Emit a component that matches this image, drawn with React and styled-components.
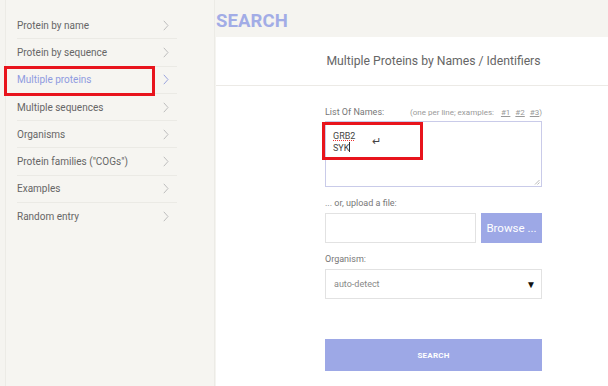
import React from "react";
import styled, { createGlobalStyle } from "styled-components";

const Global = createGlobalStyle`
  html, body { margin: 0; padding: 0; background: #f5f4f0; }
  body { font-family: Roboto, "Liberation Sans", sans-serif; width: 608px; height: 386px; overflow: hidden; }
  * { box-sizing: border-box; }
`;

const Page = styled.div`
  display: flex;
  height: 386px;
  padding-left: 5px;
`;

const Sidebar = styled.nav`
  width: 210px;
  flex: none;
  background: #f6f5f1;
  border-left: 1px solid #ecebe6;
  border-right: 1px solid #ecebe6;
  padding: 12px 0 0 11px;
  position: relative;
`;

const NavItem = styled.div`
  position: relative;
  width: 160px;
  height: 27.3px;
  display: flex;
  align-items: center;
  justify-content: space-between;
  font-size: 10px;
  color: ${p => (p.$active ? "#8f9be0" : "#666")};
  border-bottom: ${p => (p.$last ? "none" : "1px solid #ebeae5")};
  padding-right: 8px;
`;

const Chevron = styled.svg`
  width: 6px;
  height: 11px;
  flex: none;
`;

const Highlight = styled.div`
  position: absolute;
  left: ${p => p.$l}px;
  top: ${p => p.$t}px;
  width: ${p => p.$w}px;
  height: ${p => p.$h}px;
  border: 3px solid #e8141c;
  pointer-events: none;
`;

const Main = styled.main`
  flex: 1;
  display: flex;
  flex-direction: column;
  margin-left: 1px;
`;

const Title = styled.h1`
  margin: 0;
  height: 37px;
  padding-top: 11px;
  font-size: 18.5px;
  font-weight: 700;
  color: #a2ace6;
  line-height: 20px;
  letter-spacing: 0.1px;
`;

const Panel = styled.section`
  flex: 1;
  background: #fff;
  display: flex;
  flex-direction: column;
`;

const PanelHeader = styled.div`
  height: 49px;
  border-bottom: 1px solid #eceae6;
  display: flex;
  align-items: center;
  padding-left: 109px;
`;

const PanelTitle = styled.div`
  width: 217px;
  text-align: center;
  font-size: 12.2px;
  color: #666;
  white-space: nowrap;
`;

const Form = styled.div`
  width: 217px;
  margin-left: 109px;
  padding-top: 21px;
  display: flex;
  flex-direction: column;
  position: relative;
`;

const LabelRow = styled.div`
  display: flex;
  justify-content: space-between;
  align-items: baseline;
  height: 12px;
  margin-bottom: 2px;
  white-space: nowrap;
`;

const Label = styled.span`
  font-size: 9px;
  color: #777;
`;

const Hint = styled.span`
  font-size: 8px;
  color: #999;
  a { color: #999; text-decoration: underline; margin-left: 5px; }
`;

const TextArea = styled.div`
  height: 66px;
  border: 1px solid #c9cbe9;
  padding: 9px 7px;
  font-size: 9px;
  line-height: 10.5px;
  color: #444;
  position: relative;
`;

const Misspelled = styled.span`
  text-decoration: underline dotted #e33;
  text-decoration-thickness: 1px;
  text-underline-offset: 1px;
`;

const Caret = styled.span`
  display: inline-block;
  width: 1px;
  height: 10px;
  background: #333;
  vertical-align: -1px;
`;

const ReturnMark = styled.span`
  position: absolute;
  left: 46px;
  top: 15px;
  font-size: 11px;
  color: #444;
`;

const Resize = styled.svg`
  position: absolute;
  right: 1px;
  bottom: 1px;
  width: 6px;
  height: 6px;
`;

const SmallLabel = styled.div`
  font-size: 9px;
  color: #777;
  margin-top: ${p => p.$mt}px;
  margin-bottom: ${p => p.$mb}px;
`;

const FileRow = styled.div`
  display: flex;
  gap: 5px;
  height: 30px;
`;

const FileBox = styled.div`
  flex: 1;
  border: 1px solid #e2e2e2;
`;

const Browse = styled.div`
  width: 61px;
  background: #9da8e6;
  color: #fff;
  font-size: 11.5px;
  display: flex;
  align-items: center;
  justify-content: center;
`;

const Select = styled.div`
  height: 30px;
  border: 1px solid #e2e2e2;
  display: flex;
  align-items: center;
  justify-content: space-between;
  padding: 0 5px 0 8px;
  font-size: 9px;
  color: #888;
`;

const Arrow = styled.span`
  color: #111;
  font-size: 10px;
`;

const SearchButton = styled.div`
  margin-top: 40px;
  height: 32px;
  background: #9da8e6;
  color: #fff;
  font-size: 8px;
  font-weight: 700;
  display: flex;
  align-items: center;
  justify-content: center;
  letter-spacing: 0.2px;
`;

const items = [
  "Protein by name",
  "Protein by sequence",
  "Multiple proteins",
  "Multiple sequences",
  "Organisms",
  "Protein families (\"COGs\")",
  "Examples",
  "Random entry",
];

const ChevronIcon = ({ active }) => (
  <Chevron viewBox="0 0 6 11">
    <path d="M0.8 0.8 L5 5.5 L0.8 10.2" fill="none" stroke={active ? "#9aa4de" : "#bdbdbd"} strokeWidth="1" />
  </Chevron>
);

export default function App() {
  return (
    <>
      <Global />
      <Page>
        <Sidebar>
          {items.map((t, i) => (
            <NavItem key={t} $active={i === 2} $last={i === items.length - 1}>
              <span>{t}</span>
              <ChevronIcon active={i === 2} />
            </NavItem>
          ))}
          <Highlight $l={-2} $t={66} $w={151} $h={30} />
        </Sidebar>
        <Main>
          <Title>SEARCH</Title>
          <Panel>
            <PanelHeader>
              <PanelTitle>Multiple Proteins by Names / Identifiers</PanelTitle>
            </PanelHeader>
            <Form>
              <LabelRow>
                <Label>List Of Names:</Label>
                <Hint>
                  (one per line; examples: <a>#1</a><a>#2</a><a>#3</a>)
                </Hint>
              </LabelRow>
              <TextArea>
                <Misspelled>GRB2</Misspelled>
                <br />
                SYK<Caret />
                <ReturnMark>↵</ReturnMark>
                <Resize viewBox="0 0 6 6">
                  <path d="M5.5 1 L1 5.5 M5.5 3.5 L3.5 5.5" stroke="#aaa" strokeWidth="0.8" />
                </Resize>
              </TextArea>
              <SmallLabel $mt={11} $mb={5}>... or, upload a file:</SmallLabel>
              <FileRow>
                <FileBox />
                <Browse>Browse ...</Browse>
              </FileRow>
              <SmallLabel $mt={11} $mb={5}>Organism:</SmallLabel>
              <Select>
                <span>auto-detect</span>
                <Arrow>▼</Arrow>
              </Select>
              <SearchButton>SEARCH</SearchButton>
              <Highlight $l={-3} $t={36} $w={101} $h={38} />
            </Form>
          </Panel>
        </Main>
      </Page>
    </>
  );
}
